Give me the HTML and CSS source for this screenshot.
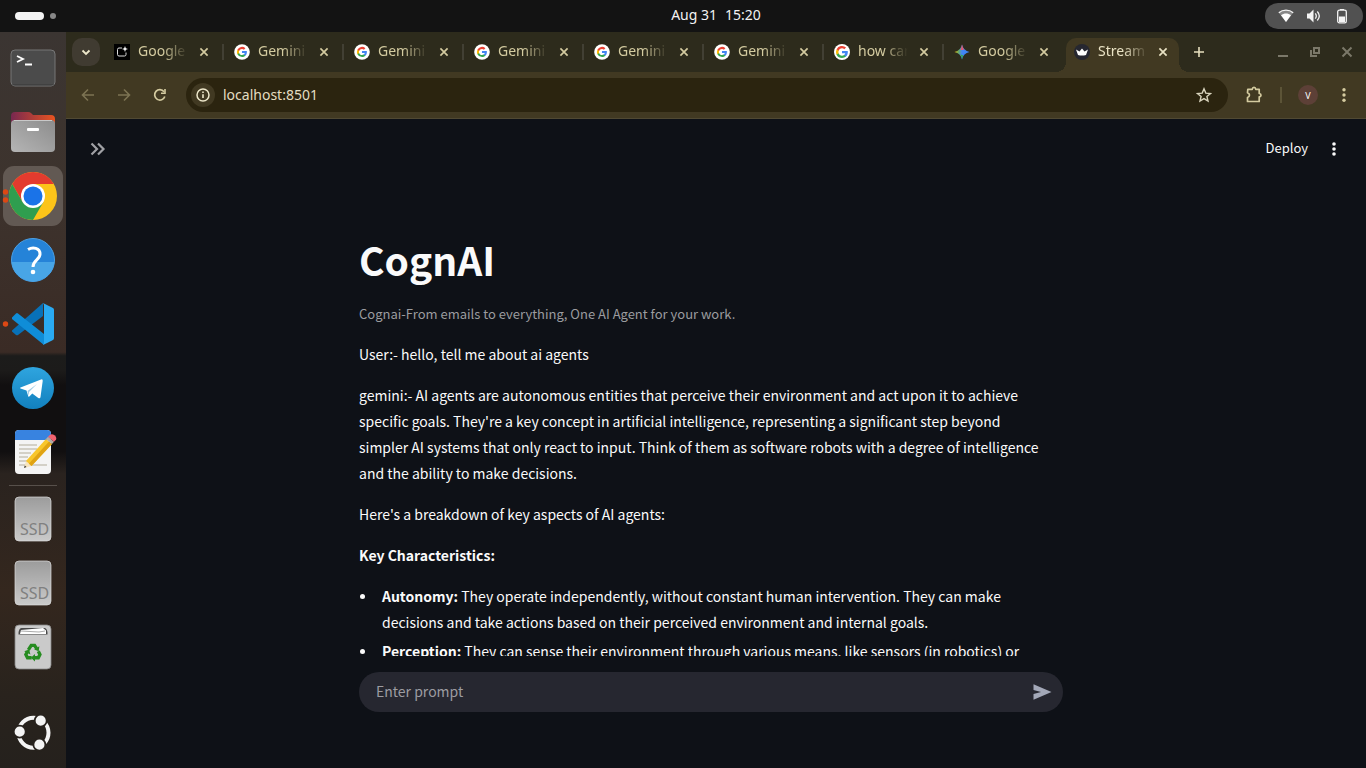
FILE: index.html
```html
<!DOCTYPE html>
<html lang="en">
<head>
<meta charset="utf-8">
<meta name="viewport" content="width=device-width, initial-scale=1">
<title>CognAI</title>
<link rel="stylesheet" href="styles.css">
</head>
<body>
<svg class="defs" width="0" height="0" aria-hidden="true">
  <defs>
    <g id="glogo">
      <path fill="#4285f4" d="M22.56 12.25c0-.78-.07-1.53-.2-2.25H12v4.26h5.92a5.06 5.06 0 0 1-2.2 3.32v2.77h3.57c2.08-1.92 3.27-4.74 3.27-8.1z"/>
      <path fill="#34a853" d="M12 23c2.97 0 5.46-.98 7.28-2.66l-3.57-2.77c-.98.66-2.23 1.06-3.71 1.06-2.86 0-5.29-1.93-6.16-4.53H2.18v2.84A11 11 0 0 0 12 23z"/>
      <path fill="#fbbc05" d="M5.84 14.09a6.6 6.6 0 0 1 0-4.18V7.07H2.18a11 11 0 0 0 0 9.86l3.66-2.84z"/>
      <path fill="#ea4335" d="M12 5.38c1.62 0 3.06.56 4.21 1.64l3.15-3.15A11 11 0 0 0 2.18 7.07l3.66 2.84C6.71 7.31 9.14 5.38 12 5.38z"/>
    </g>
    <symbol id="g" viewBox="0 0 16 16">
      <circle cx="8" cy="8" r="7.8" fill="#fff"/>
      <use href="#glogo" transform="translate(2.4 2.4) scale(.465)"/>
    </symbol>
    <symbol id="x" viewBox="0 0 16 16"><path d="M4.400 4.400l7.200 7.200M11.600 4.400l-7.200 7.200" stroke="currentColor" stroke-width="1.700"/></symbol>
    <linearGradient id="drive" x1="0" y1="0" x2="0" y2="1"><stop offset="0" stop-color="#9c9c9c"/><stop offset="1" stop-color="#cacaca"/></linearGradient>
  </defs>
</svg>

<header class="topbar">
  <button class="workspaces" aria-label="Activities"><span class="pill"></span><span class="dot"></span></button>
  <button class="clock"><span>Aug 31</span><span>15:20</span></button>
  <button class="status" aria-label="System menu">
    <svg width="16" height="16" viewBox="0 0 16 16"><path d="M.8 4.800C4.800 1.300 11.200 1.300 15.200 4.800L8 14z" fill="#888"/><path d="M.8 4.800C4.800 1.300 11.200 1.300 15.200 4.800" fill="none" stroke="#f4f4f4" stroke-width="1.300"/><path d="M3 7.200c3-2.200 7-2.200 10 0L8 14z" fill="#fff"/></svg>
    <svg width="16" height="16" viewBox="0 0 16 16"><path d="M1 5.500h2.500L7.500 1.500v13L3.500 10.500H1z" fill="#f4f4f4"/><path d="M9.300 5.300q2 2.700 0 5.400M11.300 3.500q4 4.500 0 9" fill="none" stroke="#f4f4f4" stroke-width="1.300"/></svg>
    <svg width="16" height="16" viewBox="0 0 16 16"><rect x="3.700" y="2.200" width="8.600" height="12.600" rx="1.600" fill="none" stroke="#f4f4f4" stroke-width="1.300"/><path d="M6 1h4v1H6zM5 8.500h6V14H5z" fill="#f4f4f4"/></svg>
  </button>
</header>

<div class="desktop">
<nav class="dock" aria-label="Dock">
  <button class="app" aria-label="Terminal"><svg viewBox="0 0 60 60"><rect x="8" y="12" width="44" height="36" rx="4" fill="#4b4b4b" stroke="#777" /><path d="M8 47h44" stroke="#252525" opacity=".5"/><path d="M14 18l6 3-6 3M22 26.500h7" fill="none" stroke="#fff" stroke-width="1.800"/></svg></button>
  <button class="app" aria-label="Files"><svg viewBox="0 0 60 60"><defs><linearGradient id="fb"><stop offset="0" stop-color="#782850"/><stop offset="1" stop-color="#e95420"/></linearGradient><linearGradient id="ff" x1="1" y1="0" x2="0" y2="1"><stop offset="0" stop-color="#8c8c8c"/><stop offset="1" stop-color="#b5b5b5"/></linearGradient></defs><path d="M8 14a4 4 0 0 1 4-4h13q2 0 3 1l2 2h18a4 4 0 0 1 4 4v14H8z" fill="url(#fb)"/><rect x="8" y="18" width="44" height="32" rx="4" fill="url(#ff)"/><path d="M11 18.500h38" stroke="#c8c8c8"/><rect x="24" y="26" width="12" height="3" rx="1" fill="#fff"/></svg></button>
  <button class="app active" aria-label="Google Chrome"><svg viewBox="0 0 60 60"><circle cx="30" cy="30" r="24" fill="#fcc419"/><path d="M30 30V18H50.800A24 24 0 0 0 9.200 18L19.600 36z" fill="#e33b2e"/><path d="M9.200 18A24 24 0 0 0 30 54L40.400 36 30 30 19.600 36z" fill="#2f9e4f"/><circle cx="30" cy="30" r="12" fill="#fff"/><circle cx="30" cy="30" r="9.500" fill="#1a73e8"/><circle cx="2.500" cy="26" r="2.700" fill="#dd4814"/><circle cx="2.500" cy="34" r="2.700" fill="#dd4814"/></svg></button>
  <button class="app" aria-label="Help"><svg viewBox="0 0 60 60"><circle cx="30" cy="30" r="21.500" fill="#2583d8" stroke="#4ba0e5"/><path d="M8.600 32a21.500 21.500 0 0 0 42.800 0z" fill="#48a5e6"/><path d="M25 19.500c5-3 12-1.500 12 4.500 0 6-7 6-7 13" fill="none" stroke="#fff" stroke-width="3"/><circle cx="30" cy="42" r="2.300" fill="#fff"/></svg></button>
  <button class="app" aria-label="Visual Studio Code"><svg viewBox="0 0 60 60"><path d="M9 36.500L40 9v13L15 41q-1 .5-2 0l-4-3.500z" fill="#0871b8"/><path d="M9 23.500l4-4q1-.8 2 0L41 40v11L9 25z" fill="#0f8dd8"/><path d="M40 9l10 5q1 .5 1 2v28q0 1.500-1 2l-10 5q1-1 1-2.500v-37Q41 10 40 9z" fill="#2aaaf2"/><circle cx="2.500" cy="30" r="2.700" fill="#dd4814"/></svg></button>
  <button class="app" aria-label="Telegram"><svg viewBox="0 0 60 60"><defs><linearGradient id="tg" x1="0" y1="0" x2="0" y2="1"><stop offset="0" stop-color="#2fa5df"/><stop offset="1" stop-color="#1280be"/></linearGradient></defs><circle cx="30" cy="30" r="21" fill="url(#tg)"/><path d="M17.500 29.500L38 21.500q2-.7 1.700 1.500L37.500 39q-.3 2-2.200 1l-6-4.500-3 3q-1 .8-1.200-.7L23.500 32.500l-6-2q-1-.5 0-1z" fill="#fff"/><path d="M24.500 33l9.500-7-8 8-.5 4z" fill="#9ecbe6"/></svg></button>
  <button class="app" aria-label="Text Editor"><svg viewBox="0 0 60 60"><rect x="12" y="8" width="36" height="44" rx="4" fill="#f4f4f4"/><path d="M12 18v-6a4 4 0 0 1 4-4h28a4 4 0 0 1 4 4v6z" fill="#3883e0"/><path d="M16 23h18M16 27h18M16 31h12M16 35h9M16 39h8M16 43h28" stroke="#c8c4b8" stroke-width="1.600"/><path d="M21 46l2-7 5.500 5z" fill="#f6e4bf"/><path d="M23 39L43 17l6 5-20.500 22z" fill="#f8c62c"/><path d="M26 41.500L46 19.500l3 2.500-20.500 22z" fill="#e0a314"/><path d="M43 17l2-2.200 6 5L49 22z" fill="#b2aaa5"/><path d="M45 14.800l2-2q2-1.500 4.500.5t1.500 4.500l-2 2z" fill="#f16370"/><path d="M21 46l.8-2.500 1.700 1.500z" fill="#333"/></svg></button>
  <hr>
  <button class="app" aria-label="SSD volume"><svg viewBox="0 0 60 60"><rect x="12" y="8" width="36" height="44" rx="4" fill="url(#drive)" stroke="#ddd" stroke-width=".7"/><text x="17" y="46" class="ssd">SSD</text></svg></button>
  <button class="app" aria-label="SSD volume"><svg viewBox="0 0 60 60"><rect x="12" y="8" width="36" height="44" rx="4" fill="url(#drive)" stroke="#ddd" stroke-width=".7"/><text x="17" y="46" class="ssd">SSD</text></svg></button>
  <button class="app" aria-label="Trash"><svg viewBox="0 0 60 60"><rect x="12" y="8" width="36" height="44" rx="4" fill="#cacaca" stroke="#888" stroke-width=".8"/><path d="M15.500 17.500q0-6.500 3-6.500h23q3 0 3 6.500z" fill="#484848"/><path d="M17 17l1-4 22-2 3 2.500v3.500z" fill="#fff"/><path d="M18 14l18 1 6-1" fill="none" stroke="#aaa"/><g transform="translate(5 5.500) scale(.83)"><g fill="none" stroke="#268c20" stroke-width="4"><path d="M24.500 33l3.500-5.500h4l2.500 4"/><path d="M36.500 34.500l2 4-2 4H31"/><path d="M28.500 42.500h-5l-2-4 2-3.500"/></g><path d="M37.800 28.500l-.8 6-5.500-2zM32.500 38v9l-5-4.500zM19.500 34.500l6-2 1.500 6z" fill="#268c20"/></g></svg></button>
  <button class="app grid" aria-label="Show Applications"><svg viewBox="0 0 60 60"><circle cx="30.500" cy="29.700" r="15" fill="none" stroke="#f4f4f4" stroke-width="4"/><g fill="#f4f4f4" stroke="#27221d" stroke-width="1.800"><circle cx="16.700" cy="28.700" r="6"/><circle cx="37.700" cy="17.700" r="6"/><circle cx="36.400" cy="41.700" r="6"/></g></svg></button>
</nav>

<div class="browser">
  <div class="tabstrip">
    <button class="tabsearch" aria-label="Search tabs"><svg width="16" height="16" viewBox="0 0 16 16"><path d="M4.500 6.500L8 10l3.500-3.500" fill="none" stroke="currentColor" stroke-width="1.800"/></svg></button>
    <div class="tabs">
      <div class="tab"><svg class="fav" viewBox="0 0 16 16"><path d="M0 0h16v16H0z" fill="#000"/><path d="M8 4H5q-1.500 0-1.500 1.500v5Q3.500 12 5 12h5.500q1.500 0 1.500-1.500V8.500" fill="none" stroke="#ddd"/><path d="M11 2l.8 2.200L14 5l-2.200.8L11 8l-.8-2.200L8 5l2.200-.8z" fill="#fff"/></svg><span class="name">Google</span><button aria-label="Close tab"><svg viewBox="0 0 16 16"><use href="#x"/></svg></button></div>
      <div class="tab"><svg class="fav"><use href="#g"/></svg><span class="name">Gemini</span><button aria-label="Close tab"><svg viewBox="0 0 16 16"><use href="#x"/></svg></button></div>
      <div class="tab"><svg class="fav"><use href="#g"/></svg><span class="name">Gemini</span><button aria-label="Close tab"><svg viewBox="0 0 16 16"><use href="#x"/></svg></button></div>
      <div class="tab"><svg class="fav"><use href="#g"/></svg><span class="name">Gemini</span><button aria-label="Close tab"><svg viewBox="0 0 16 16"><use href="#x"/></svg></button></div>
      <div class="tab"><svg class="fav"><use href="#g"/></svg><span class="name">Gemini</span><button aria-label="Close tab"><svg viewBox="0 0 16 16"><use href="#x"/></svg></button></div>
      <div class="tab"><svg class="fav"><use href="#g"/></svg><span class="name">Gemini</span><button aria-label="Close tab"><svg viewBox="0 0 16 16"><use href="#x"/></svg></button></div>
      <div class="tab"><svg class="fav" viewBox="0 0 16 16"><circle cx="8" cy="8" r="8" fill="#fff"/><use href="#glogo" transform="translate(1.400 1.400) scale(.55)"/></svg><span class="name">how can</span><button aria-label="Close tab"><svg viewBox="0 0 16 16"><use href="#x"/></svg></button></div>
      <div class="tab last"><svg class="fav" viewBox="0 0 16 16"><defs><linearGradient id="gm" x1="0" y1=".4" x2="1" y2=".5"><stop offset="0" stop-color="#fbbc05"/><stop offset=".25" stop-color="#6fae5a"/><stop offset=".5" stop-color="#4285f4"/><stop offset="1" stop-color="#3b82f6"/></linearGradient></defs><path d="M8 .5Q9.300 6.700 15.500 8 9.300 9.300 8 15.500 6.700 9.300.5 8 6.700 6.700 8 .5z" fill="url(#gm)"/><path d="M8 .5q.7 3.500 2.300 5.200L6.500 6Q7.500 4 8 .5z" fill="#e8566b"/><path d="M6.500 10.500Q7.600 12.500 8 15.500q.4-2.500 1.300-4.200z" fill="#34a853"/></svg><span class="name">Google</span><button aria-label="Close tab"><svg viewBox="0 0 16 16"><use href="#x"/></svg></button></div>
      <div class="tab current"><svg class="fav" viewBox="0 0 16 16"><circle cx="8" cy="8" r="8" fill="#262730"/><path d="M2 5.500l3.500 2L8 4.500l2.500 3 3.500-2-2 5.500q-4 1-8 0z" fill="#fff"/></svg><span class="name">Stream</span><button aria-label="Close tab"><svg viewBox="0 0 16 16"><use href="#x"/></svg></button></div>
    </div>
    <button class="newtab" aria-label="New tab"><svg width="16" height="16" viewBox="0 0 16 16"><path d="M8 3v10M3 8h10" stroke="currentColor" stroke-width="1.600"/></svg></button>
    <div class="wincontrols">
      <button aria-label="Minimize"><svg width="16" height="16" viewBox="0 0 16 16"><path d="M3 12h10" stroke="currentColor" stroke-width="2"/></svg></button>
      <button aria-label="Restore"><svg width="16" height="16" viewBox="0 0 16 16"><path d="M7 4h5v5H7zM4 6v6h6" fill="none" stroke="currentColor" stroke-width="2"/></svg></button>
      <button aria-label="Close window"><svg width="16" height="16" viewBox="0 0 16 16"><path d="M3.500 3.500l9 9M12.500 3.500l-9 9" stroke="currentColor" stroke-width="2"/></svg></button>
    </div>
  </div>

  <div class="toolbar">
    <div class="navbtns">
      <button class="dim" aria-label="Back"><svg width="16" height="16" viewBox="0 0 16 16"><path d="M14 8H3M8 2.500L2.500 8 8 13.500" fill="none" stroke="currentColor" stroke-width="1.600"/></svg></button>
      <button class="dim" aria-label="Forward"><svg width="16" height="16" viewBox="0 0 16 16"><path d="M2 8h11M8 2.500L13.500 8 8 13.500" fill="none" stroke="currentColor" stroke-width="1.600"/></svg></button>
      <button aria-label="Reload"><svg width="16" height="16" viewBox="0 0 16 16"><path d="M12.800 9.500A5.200 5.200 0 1 1 12 4.700" fill="none" stroke="currentColor" stroke-width="1.700"/><path d="M13.800 2v5H9V5.500h3.200V2z" fill="currentColor"/></svg></button>
    </div>
    <div class="omnibox">
      <button class="info" aria-label="View site information"><svg width="16" height="16" viewBox="0 0 16 16"><circle cx="8" cy="8" r="6" fill="none" stroke="currentColor" stroke-width="1.500"/><path d="M8 7.200V11M8 4.500v1.600" stroke="currentColor" stroke-width="1.600"/></svg></button>
      <input type="text" aria-label="Address" value="localhost:8501">
      <button class="star" aria-label="Bookmark"><svg width="16" height="16" viewBox="0 0 16 16"><path d="M8 1.800l1.800 4.300 4.700.4-3.600 3 1.100 4.600L8 11.600l-4 2.500 1.100-4.600-3.600-3 4.700-.4z" fill="none" stroke="currentColor" stroke-width="1.400"/></svg></button>
    </div>
    <div class="actions">
      <button aria-label="Extensions"><svg width="18" height="18" viewBox="0 0 18 18"><path d="M2.800 3.300h4.400q.3-1.900 1.800-1.900t1.800 1.900h3.400v4.200q1.800.2 1.800 1.700t-1.800 1.700v4.600H2.500v-4q2-.7 2-2.400T2.500 6.700z" fill="none" stroke="currentColor" stroke-width="1.700" stroke-linejoin="round"/></svg></button>
      <span class="rule"></span>
      <button class="avatar" aria-label="Profile">V</button>
      <button aria-label="Chrome menu"><svg width="16" height="16" viewBox="0 0 16 16" fill="currentColor"><circle cx="8" cy="2.700" r="1.700"/><circle cx="8" cy="8" r="1.700"/><circle cx="8" cy="13.300" r="1.700"/></svg></button>
    </div>
  </div>

  <div class="page">
    <div class="apphead">
      <button class="expand" aria-label="Open sidebar"><svg width="16" height="16" viewBox="0 0 16 16"><path d="M1.500 2.500L7 8l-5.500 5.500M8 2.500L13.500 8 8 13.500" fill="none" stroke="currentColor" stroke-width="2.200"/></svg></button>
      <div class="appmenu">
        <button class="deploy">Deploy</button>
        <button aria-label="Main menu"><svg width="16" height="16" viewBox="0 0 16 16" fill="currentColor"><circle cx="8" cy="3" r="1.800"/><circle cx="8" cy="8" r="1.800"/><circle cx="8" cy="13" r="1.800"/></svg></button>
      </div>
    </div>
    <main class="scroll">
      <div class="block content">
        <h1>CognAI</h1>
        <p class="caption">Cognai-From emails to everything, One AI Agent for your work.</p>
        <p>User:- hello, tell me about ai agents</p>
        <p>gemini:- AI agents are autonomous entities that perceive their environment and act upon it to achieve specific goals. They're a key concept in artificial intelligence, representing a significant step beyond simpler AI systems that only react to input. Think of them as software robots with a degree of intelligence and the ability to make decisions.</p>
        <p>Here's a breakdown of key aspects of AI agents:</p>
        <p><strong>Key Characteristics:</strong></p>
        <ul>
          <li><strong>Autonomy:</strong> They operate independently, without constant human intervention. They can make decisions and take actions based on their perceived environment and internal goals.</li>
          <li><strong>Perception:</strong> They can sense their environment through various means, like sensors (in robotics) or</li>
        </ul>
      </div>
    </main>
    <div class="bottom">
      <form class="block prompt">
        <input type="text" aria-label="Enter prompt" placeholder="Enter prompt">
        <button type="button" aria-label="Send"><svg width="20" height="20" viewBox="0 0 20 20"><path d="M1.500 2.200l18 7.800-18 7.800V12l7.500-2-7.500-2z" fill="currentColor"/></svg></button>
      </form>
    </div>
  </div>
</div>
</div>
</body>
</html>
```
FILE: styles.css
```css
* { box-sizing: border-box; }
body {
  margin: 0;
  height: 100vh;
  display: flex;
  flex-direction: column;
  overflow: hidden;
  background: #131313;
  font-family: "Noto Sans", sans-serif;
}
button {
  display: flex;
  align-items: center;
  justify-content: center;
  padding: 0;
  border: 0;
  background: none;
  color: inherit;
  font: inherit;
}
svg { display: block; }
.defs { position: absolute; }

/* desktop top bar */
.topbar {
  height: 32px;
  flex: none;
  display: grid;
  grid-template-columns: 66px 1fr;
  align-items: center;
  color: #f2f2f2;
  font-size: 14px;
}
.workspaces { gap: 6px; padding-left: 5px; }
.pill { width: 29px; height: 8px; border-radius: 4px; background: #f4f4f4; }
.dot { width: 6px; height: 6px; border-radius: 50%; background: #888; }
.clock { gap: 8px; grid-area: 1 / 2; justify-self: center; padding-bottom: 3px; }
.status {
  grid-area: 1 / 2;
  justify-self: end;
  width: 98px;
  height: 26px;
  margin-right: 3px;
  gap: 12px;
  border-radius: 13px;
  background: #515151;
}

.desktop { flex: 1; min-height: 0; display: flex; }

/* dock */
.dock {
  width: 66px;
  flex: none;
  display: flex;
  flex-direction: column;
  align-items: center;
  gap: 4px;
  padding: 6px 0 5px;
  background: linear-gradient(#3b3532 0, #3d332d 22%, #3a2b25 43.5%, #1c1c1b 44%, #1c1b1a 46%, #110f10 48%, #110f10 57%, #2a231f 60%, #34271e 76%, #29231d 90%, #25211d 100%);
}
.app { width: 60px; height: 60px; flex: none; border-radius: 11px; }
.app svg { width: 60px; height: 60px; overflow: visible; }
.app.active { background: #625953; }
.dock hr { width: 48px; height: 1px; margin: -1px 0; border: 0; background: #57504b; }
.grid { margin-top: auto; }
.ssd { font-size: 16px; fill: #808080; }

/* browser frame */
.browser { flex: 1; min-width: 0; display: flex; flex-direction: column; background: #413922; color: #d4cba0; }
.tabstrip { height: 40px; flex: none; display: flex; align-items: center; padding-left: 6px; background: #2d2b1c; }
.tabsearch { width: 28px; height: 28px; flex: none; border-radius: 10px; background: #403b31; color: #eee8cb; }
.tabs { flex: 0 1 1073px; min-width: 0; display: flex; align-self: flex-end; height: 34px; margin-left: 6px; font-size: 14px; line-height: 20px; }
.tab { flex: 0 1 120px; min-width: 0; display: flex; align-items: center; height: 28px; padding-left: 8px; position: relative; }
.tab:not(.last):not(.current)::after { content: ""; position: absolute; right: 2px; top: 6px; width: 2px; height: 16px; background: #424034; }
.fav { width: 16px; height: 16px; flex: none; }
.name { flex: 0 1 50px; min-width: 0; overflow: hidden; white-space: nowrap; margin-left: 8px; padding-bottom: 2px; -webkit-mask-image: linear-gradient(90deg, #000 50%, transparent 100%); mask-image: linear-gradient(90deg, #000 50%, transparent 100%); }
.tab button { width: 16px; height: 16px; flex: none; margin-left: 8px; }
.tab button svg { width: 16px; height: 16px; }
.tab.current { flex-basis: 113px; height: 34px; padding-bottom: 6px; background: #413922; border-radius: 10px 10px 0 0; color: #e9e2c4; }
.tab.current button { margin-left: 7px; }
.tab.current::before, .tab.current::after { content: ""; position: absolute; bottom: 0; width: 10px; height: 10px; }
.tab.current::before { right: 100%; background: radial-gradient(circle at 0 0, transparent 10px, #413922 10px); }
.tab.current::after { left: 100%; background: radial-gradient(circle at 100% 0, transparent 10px, #413922 10px); }
.newtab { width: 28px; height: 28px; flex: none; margin-left: 6px; color: #e6dfbd; }
.wincontrols { display: flex; gap: 16px; margin-left: auto; padding-right: 11px; color: #7b7869; }

.toolbar { height: 47px; flex: none; display: flex; align-items: center; padding: 0 14px; border-bottom: 1px solid #504933; }
.navbtns { display: flex; gap: 20px; }
.dim { color: #7c7353; }
.omnibox { flex: 1; height: 34px; display: flex; align-items: center; margin-left: 18px; padding: 0 16px 0 5px; border-radius: 17px; background: #2b240f; }
.info { width: 24px; height: 24px; border-radius: 50%; background: #413922; color: #eee8cb; }
.omnibox input { flex: 1; min-width: 0; margin-left: 8px; padding: 0 0 2px; border: 0; background: none; color: #e4ddc1; font: inherit; font-size: 14px; }
.star { color: #d9d4bd; }
.actions { display: flex; align-items: center; }
.actions > button:first-child { margin-left: 17px; }
.rule { width: 2px; height: 16px; margin: 0 16px 0 17px; background: #5c5437; }
.actions .avatar { width: 20px; height: 20px; margin-right: 18px; border-radius: 50%; background: #5d4037; color: #fff; font-size: 9px; }

/* app page */
.page { flex: 1; min-height: 0; display: flex; flex-direction: column; background: #0e1117; color: #fafafa; font: 14px/26px "Noto Sans CJK SC", "Noto Sans", sans-serif; }
.apphead { height: 60px; flex: none; display: flex; align-items: center; justify-content: space-between; padding: 0 24px; }
.expand { color: #a0a1a5; }
.appmenu { display: flex; align-items: center; gap: 18px; }
.deploy { padding-bottom: 2px; font-size: 13px; }
.block { width: calc(100% - 32px); max-width: 704px; margin: 0 auto; }
.scroll { flex: 1; min-height: 0; overflow: hidden; padding-right: 10px; }
.content { padding: 48px 0 0; }
h1 { margin: 0; padding: 6px 0 18px; font-size: 39px; line-height: 52px; font-weight: 700; }
.content p { margin: 0 0 15px; padding-right: 12px; }
.content .caption { margin-bottom: 16px; font-size: 13px; line-height: 22px; color: #9b9c9f; }
ul { margin: 0; padding: 0; list-style: none; }
li { position: relative; margin-bottom: 3px; padding-left: 23px; }
li::before { content: ""; position: absolute; left: 1px; top: 11px; width: 5px; height: 5px; border-radius: 50%; background: #fafafa; }
strong { font-weight: 700; }
.bottom { flex: none; padding: 16px 10px 56px 0; }
.prompt { height: 40px; display: flex; align-items: center; padding: 0 11px 0 17px; border-radius: 20px; background: #262730; color: #a3a8b8; }
.prompt input { flex: 1; min-width: 0; padding: 0 0 3px; border: 0; background: none; color: #fafafa; font: inherit; }
.prompt input::placeholder { color: #9c9ca1; opacity: 1; }
```
